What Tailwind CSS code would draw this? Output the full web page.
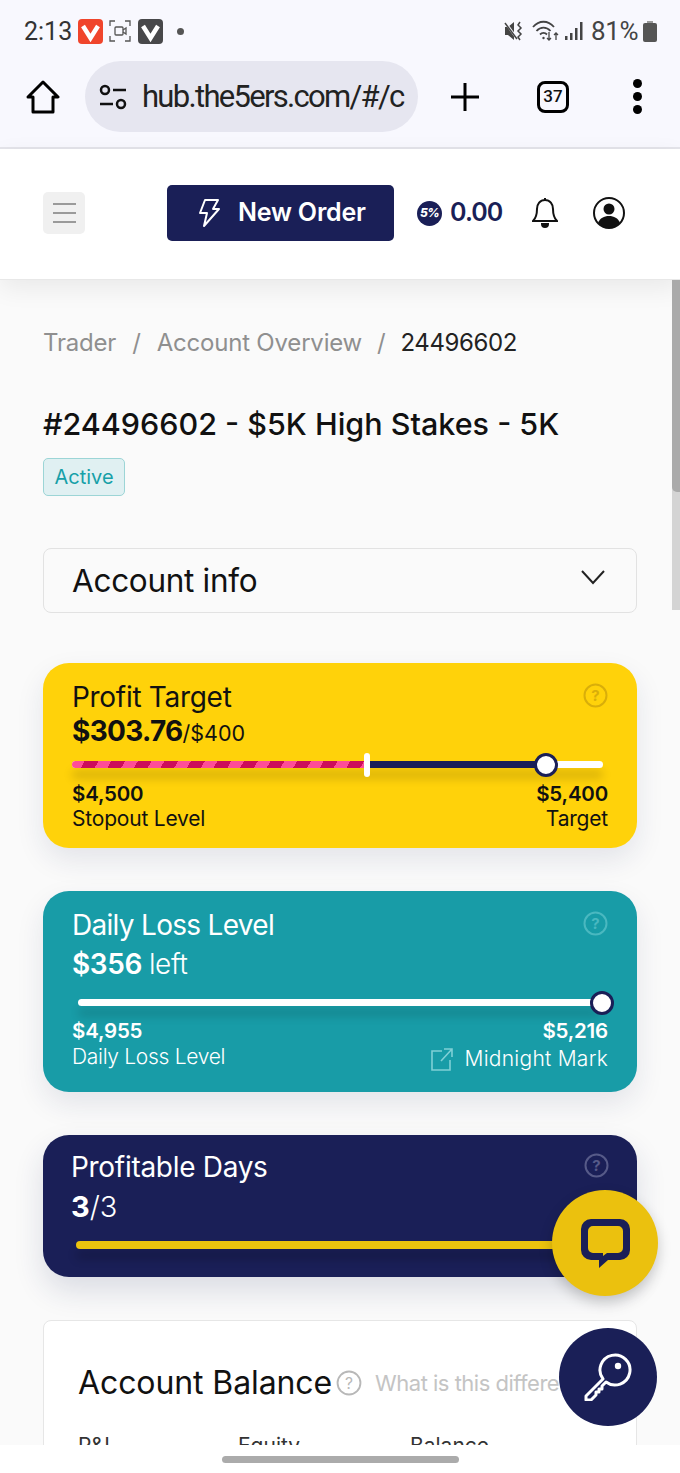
<!DOCTYPE html>
<html lang="en">
<head>
  <meta charset="UTF-8">
  <title>Account Overview</title>
  <meta name="viewport" content="width=device-width, initial-scale=1" />
  <script src="https://cdn.jsdelivr.net/npm/@tailwindcss/browser@4"></script>
</head>
<body class="m-0 bg-white">
<div class="relative w-[680px] h-[1473px] overflow-hidden flex flex-col bg-[#fafafa] font-['Inter',sans-serif] text-[#111]">

  <!-- phone + browser chrome -->
  <div class="h-[149px] shrink-0 bg-[#f8f8fe] border-b-2 border-[#e4e4ea] font-['Roboto',sans-serif]">
    <div class="h-[61px] pl-[24px] pr-[23px] pt-[16px] flex items-start justify-between">
      <div class="flex items-center h-[30px]">
        <span class="text-[25px] leading-[30px] text-[#333] w-[54px] pt-[1px]">2:13</span>
        <svg class="w-[25px] h-[25px]" viewBox="0 0 25 25"><rect width="25" height="25" rx="4" fill="#f0452c"/><path d="M5 7l7.500 12L20 7" fill="none" stroke="#fff" stroke-width="4.500"/></svg>
        <svg class="w-[22px] h-[22px] ml-[6px]" viewBox="0 0 22 22" fill="none" stroke="#555" stroke-width="1.300"><path d="M1 6V1h5M16 1h5v5M21 16v5h-5M6 21H1v-5"/><rect x="6" y="7" width="8" height="8" rx="1"/><path d="M14 10l3-2v6l-3-2"/></svg>
        <svg class="w-[25px] h-[25px] ml-[7px]" viewBox="0 0 25 25"><rect width="25" height="25" rx="4" fill="#48484a"/><path d="M5 7l7.500 12L20 7" fill="none" stroke="#fff" stroke-width="4.500"/></svg>
        <span class="w-[7px] h-[7px] rounded-full bg-[#555] ml-[14px]"></span>
      </div>
      <div class="flex items-center h-[30px]">
        <svg class="w-[20px] h-[20px]" viewBox="0 0 20 20"><path d="M1 6h3l6-5v18l-6-5H1z" fill="#444"/><path d="M1 1l13 18" stroke="#f8f8fe" stroke-width="2.500"/><path d="M1 2l12 16" stroke="#444" stroke-width="1.500"/><path d="M16 1l-2 3 3 3-3 3 3 3-3 3 2 3" fill="none" stroke="#444" stroke-width="1.500"/></svg>
        <svg class="w-[27px] h-[24px] ml-[8px]" viewBox="0 0 27 24" fill="none" stroke="#444" stroke-width="1.800"><path d="M1 8c6-7 15-7 21 0M4.500 12c4-4.500 10-4.500 14 0M8 15.500c2-2 5-2 7 0"/><circle cx="11.500" cy="19" r="1.200" fill="#444" stroke="none"/><path d="M17 13v8m-2-2l2 2 2-2M24 21v-7m-2 2l2-2 2 2" stroke-width="1.300"/></svg>
        <svg class="w-[18px] h-[20px] ml-[6px]" viewBox="0 0 18 20" fill="#444"><rect x="0" y="15" width="2.500" height="4"/><rect x="5" y="12" width="2.500" height="7"/><rect x="10" y="7" width="2.500" height="12"/><rect x="15" y="1" width="2.500" height="18"/></svg>
        <span class="text-[26px] leading-[30px] tracking-[-0.3px] text-[#444] ml-[8px] w-[46px] whitespace-nowrap">81%</span>
        <svg class="w-[14px] h-[21px] ml-[6px]" viewBox="0 0 14 21" fill="#555"><rect x="4" y="0" width="6" height="3" fill="#999"/><rect y="2" width="14" height="19" rx="2"/></svg>
      </div>
    </div>
    <div class="flex items-center h-[71px] pl-[26px]">
      <svg class="w-[34px] h-[34px]" viewBox="0 0 34 34" fill="none" stroke="#000" stroke-width="3" stroke-linejoin="round"><path d="M2 17L17 2l15 15h-5v15H7V17z"/></svg>
      <div class="ml-[25px] w-[333px] h-[71px] rounded-full bg-[#e6e6f0] flex items-center pl-[14px]">
        <svg class="w-[28px] h-[26px] shrink-0" viewBox="0 0 28 26" fill="none" stroke="#111" stroke-width="2.500"><circle cx="6" cy="6" r="4"/><path d="M14 6h13M1 20h13"/><circle cx="22" cy="20" r="4"/></svg>
        <span class="ml-[15px] whitespace-nowrap text-[31px] leading-[40px] tracking-[-1.700px] text-[#222]">hub.the5ers.com/#/c</span>
      </div>
      <svg class="w-[30px] h-[30px] ml-[32px]" viewBox="0 0 30 30" fill="none" stroke="#000" stroke-width="3"><path d="M15 1v28M1 15h28"/></svg>
      <div class="ml-[57px] w-[32px] h-[32px] rounded-[8px] border-[3px] border-black flex items-center justify-center text-[17px] font-medium text-[#111]">37</div>
      <div class="ml-[64px] flex flex-col gap-[4px]">
        <span class="w-[9px] h-[9px] rounded-full bg-black"></span>
        <span class="w-[9px] h-[9px] rounded-full bg-black"></span>
        <span class="w-[9px] h-[9px] rounded-full bg-black"></span>
      </div>
    </div>
  </div>

  <!-- site header -->
  <header class="relative h-[131px] shrink-0 bg-white border-b border-[#e8e8e8] shadow-[0_8px_24px_rgba(0,0,0,0.07)] flex items-center pl-[43px] pb-[2px]">
    <div class="w-[42px] h-[42px] rounded-[5px] bg-[#f0f0f0] flex flex-col items-center justify-center gap-[7px]">
      <span class="w-[23px] h-[2px] bg-[#9a9a9a]"></span>
      <span class="w-[23px] h-[2px] bg-[#9a9a9a]"></span>
      <span class="w-[23px] h-[2px] bg-[#9a9a9a]"></span>
    </div>
    <button class="ml-[82px] w-[227px] h-[56px] rounded-[5px] bg-[#1a1f57] text-white flex items-center pl-[30px]">
      <svg class="w-[24px] h-[30px]" viewBox="0 0 24 30" fill="none" stroke="#fff" stroke-width="2" stroke-linejoin="round"><path d="M8 2h13l-5 9h6L7 28l3-13H3z"/></svg>
      <span class="ml-[17px] text-[25px] font-semibold tracking-[-0.2px]">New Order</span>
    </button>
    <div class="ml-[23px] w-[25px] h-[25px] rounded-full bg-[#1a1f57] flex items-center justify-center text-white text-[12px] font-extrabold italic tracking-[-0.5px]">5%</div>
    <span class="ml-[8px] text-[25px] font-semibold tracking-[-0.9px] text-[#1a1f57]">0.00</span>
    <svg class="ml-[30px] w-[26px] h-[32px]" viewBox="0 0 26 32" fill="none" stroke="#111" stroke-width="2"><path d="M13 3c-5 0-8 4-8 9 0 6-1 9-4 12h24c-3-3-4-6-4-12 0-5-3-9-8-9zM13 1v2"/><path d="M10 27a3 3 0 0 0 6 0z" fill="#111"/></svg>
    <svg class="ml-[35px] w-[32px] h-[32px]" viewBox="0 0 32 32"><circle cx="16" cy="16" r="15" fill="#fff" stroke="#111" stroke-width="2"/><circle cx="16" cy="12" r="5.500" fill="#111"/><path d="M5 26c2-5 6-7 11-7s9 2 11 7c-3 3-7 5-11 5s-8-2-11-5z" fill="#111"/></svg>
  </header>

  <!-- page scrollbar -->
  <div class="absolute right-0 top-[280px] w-[8px] h-[330px] bg-[#d4d4d4]">
    <div class="h-[212px] bg-[#aaa] rounded-bl-[5px]"></div>
  </div>

  <main class="flex-1 min-h-0 px-[43px] pt-[47px]">
    <nav class="flex items-center text-[24px] leading-[32px] tracking-[-0.2px] text-[#8f8f8f]">
      <span>Trader</span><span class="mx-[16px]">/</span><span>Account Overview</span><span class="mx-[15px]">/</span><span class="text-[#222] tracking-[-0.4px]">24496602</span>
    </nav>
    <h1 class="mt-[47px] text-[30.5px] leading-[36px] font-medium text-[#111]">#24496602 - $5K High Stakes - 5K</h1>
    <div class="mt-[16px] w-[82px] h-[38px] rounded-[5px] bg-[#e0f0f2] border border-[#9cd5d6] flex items-center justify-center text-[20px] text-[#17a0a8]">Active</div>

    <div class="mt-[52px] h-[65px] rounded-[8px] border border-[#e2e2e2] flex items-center justify-between pl-[28px] pr-[30px]">
      <span class="text-[31.5px] tracking-[-0.3px] text-[#111]">Account info</span>
      <svg class="w-[26px] h-[16px] -mt-[8px]" viewBox="0 0 26 16" fill="none" stroke="#222" stroke-width="2"><path d="M2 2l11 12L24 2"/></svg>
    </div>

    <!-- profit target -->
    <section class="relative mt-[50px] h-[185px] rounded-[26px] bg-[#ffd20a] shadow-[0_12px_28px_rgba(30,40,90,0.1)] pl-[29px] pr-[29px] pt-[18px] text-[#111]">
      <svg class="absolute right-[29px] top-[20px] w-[25px] h-[25px]" viewBox="0 0 25 25" fill="none" stroke="#d9ae0a" stroke-width="2"><circle cx="12.500" cy="12.500" r="11"/><text x="12.500" y="18" text-anchor="middle" font-size="15" font-weight="700" fill="#d9ae0a" stroke="none" font-family="Inter">?</text></svg>
      <div class="text-[28px] leading-[32px] tracking-[-0.3px]">Profit Target</div>
      <div class="flex items-baseline h-[36px]"><span class="text-[28px] font-bold leading-[36px] tracking-[-0.7px]">$303.76</span><span class="text-[21.500px]">/$400</span></div>
      <div class="relative mt-[12px] h-[7px] w-[531px] rounded-full bg-white shadow-[0_10px_10px_rgba(0,0,0,0.18)]">
        <div class="absolute left-0 top-0 h-[7px] w-[295px] rounded-l-full bg-[repeating-linear-gradient(120deg,#ff4d97_0,#ff4d97_11px,#cc0d5a_11px,#cc0d5a_23px)]"></div>
        <div class="absolute left-[295px] top-0 h-[7px] w-[176px] bg-[#1a1f57]"></div>
        <div class="absolute left-[292px] -top-[8px] w-[6px] h-[24px] rounded-[3px] bg-white"></div>
        <div class="absolute left-[462px] -top-[8px] w-[24px] h-[24px] rounded-full bg-white border-[3px] border-[#1a1f57]"></div>
      </div>
      <div class="mt-[13px] flex justify-between text-[21px] leading-[26px]">
        <div><div class="font-semibold text-[20.500px] tracking-[-0.2px]">$4,500</div><div class="leading-[24px] tracking-[-0.2px]">Stopout Level</div></div>
        <div class="text-right"><div class="font-semibold text-[20.500px] tracking-[-0.2px]">$5,400</div><div class="leading-[24px] tracking-[-0.2px]">Target</div></div>
      </div>
    </section>

    <!-- daily loss -->
    <section class="relative mt-[43px] h-[201px] rounded-[26px] bg-[#189ca7] shadow-[0_12px_28px_rgba(30,40,90,0.1)] pl-[29px] pr-[29px] pt-[18px] text-white">
      <svg class="absolute right-[29px] top-[20px] w-[25px] h-[25px]" viewBox="0 0 25 25" fill="none" stroke="#4ab8c0" stroke-width="2"><circle cx="12.500" cy="12.500" r="11"/><text x="12.500" y="18" text-anchor="middle" font-size="15" font-weight="700" fill="#4ab8c0" stroke="none" font-family="Inter">?</text></svg>
      <div class="text-[28px] leading-[32px] tracking-[-0.7px]">Daily Loss Level</div>
      <div class="mt-[5px] h-[36px] flex items-baseline gap-[7px] text-[28px] leading-[36px] tracking-[-0.4px]"><span class="font-semibold">$356</span><span class="font-light">left</span></div>
      <div class="relative mt-[17px] ml-[6px] h-[7px] w-[522px] rounded-full bg-white shadow-[0_10px_10px_rgba(0,0,0,0.16)]">
        <div class="absolute left-[512px] -top-[8px] w-[24px] h-[24px] rounded-full bg-white border-[3px] border-[#1a1f57]"></div>
      </div>
      <div class="mt-[12px] flex justify-between text-[21px] leading-[26px]">
        <div><div class="font-semibold text-[20.500px] tracking-[-0.2px]">$4,955</div><div class="font-light leading-[25px] tracking-[-0.3px]">Daily Loss Level</div></div>
        <div class="text-right"><div class="font-semibold text-[20.500px] tracking-[-0.2px]">$5,216</div>
          <div class="flex items-center justify-end font-light mt-[2px] tracking-[0.25px]">
            <svg class="w-[24px] h-[24px] mr-[11px]" viewBox="0 0 24 24" fill="none" stroke="#7fd0d6" stroke-width="1.600"><path d="M12 4H2v19h18V13M11 14L22 2M14 2h8v8"/></svg>
            Midnight Mark
          </div>
        </div>
      </div>
    </section>

    <!-- profitable days -->
    <section class="relative mt-[43px] h-[142px] rounded-[26px] bg-[#1a1f57] shadow-[0_14px_30px_rgba(30,40,90,0.14)] pl-[28px] pr-[30px] pt-[16px] text-white">
      <svg class="absolute right-[28px] top-[18px] w-[25px] h-[25px]" viewBox="0 0 25 25" fill="none" stroke="#565a88" stroke-width="2"><circle cx="12.500" cy="12.500" r="11"/><text x="12.500" y="18" text-anchor="middle" font-size="15" font-weight="700" fill="#565a88" stroke="none" font-family="Inter">?</text></svg>
      <div class="text-[28px] leading-[32px] tracking-[-0.3px]">Profitable Days</div>
      <div class="mt-[6px] h-[36px] text-[29px] leading-[36px]"><span class="font-bold">3</span><span class="font-light">/3</span></div>
      <div class="mt-[16px] ml-[5px] h-[8px] w-[500px] rounded-full bg-[#ecc30e] shadow-[0_10px_10px_rgba(0,0,0,0.2)]"></div>
    </section>

    <!-- account balance -->
    <section class="mt-[43px] h-[200px] rounded-[8px] bg-white border border-[#e6e6e6] pl-[34px] pt-[42px] overflow-hidden">
      <div class="flex items-center whitespace-nowrap">
        <span class="text-[32px] leading-[40px] tracking-[-0.1px] text-[#111]">Account Balance</span>
        <svg class="ml-[4px] w-[26px] h-[26px] shrink-0" viewBox="0 0 25 25" fill="none" stroke="#b8b8b8" stroke-width="1.800"><circle cx="12.500" cy="12.500" r="11"/><text x="12.500" y="18" text-anchor="middle" font-size="15" fill="#b8b8b8" stroke="none" font-family="Inter">?</text></svg>
        <span class="ml-[13px] text-[22px] text-[#c4c4c4] tracking-[-0.5px]">What is this difference?</span>
      </div>
      <div class="mt-[30px] flex text-[21px] leading-[26px] text-[#333]">
        <span class="w-[160px]">P&amp;L</span><span class="w-[172px]">Equity</span><span>Balance</span>
      </div>
    </section>
  </main>

  <!-- floating buttons -->
  <button class="absolute left-[552px] top-[1190px] w-[106px] h-[106px] rounded-full bg-[#ebc10e] shadow-[0_6px_14px_rgba(0,0,0,0.2)] flex items-center justify-center">
    <svg class="w-[49px] h-[49px]" viewBox="0 0 49 49"><path d="M10 0h29a10 10 0 0 1 10 10v21a10 10 0 0 1-10 10H27l-9 8v-8h-8a10 10 0 0 1-10-10V10a10 10 0 0 1 10-10z" fill="#1a1f57"/><path d="M12 7h25a5 5 0 0 1 5 5v17a5 5 0 0 1-5 5H26l-4 3v-3H12a5 5 0 0 1-5-5V12a5 5 0 0 1 5-5z" fill="#ebc10e"/></svg>
  </button>
  <button class="absolute left-[559px] top-[1328px] w-[98px] h-[98px] rounded-full bg-[#1a1f57] flex items-center justify-center">
    <svg class="w-[48px] h-[48px]" viewBox="0 0 48 48" fill="none" stroke="#fff" stroke-width="3" stroke-linejoin="round"><path d="M19 26A15 15 0 1 1 22 29L18 33V36H15V39H12V42L7 47H2V43z"/><circle cx="34" cy="13" r="3.200" fill="#fff" stroke="none"/></svg>
  </button>

  <!-- gesture bar -->
  <div class="absolute left-0 right-0 bottom-0 h-[28px] bg-white flex justify-center pt-[11px]">
    <div class="w-[237px] h-[7px] rounded-full bg-[#ababab]"></div>
  </div>
</div>
</body>
</html>
